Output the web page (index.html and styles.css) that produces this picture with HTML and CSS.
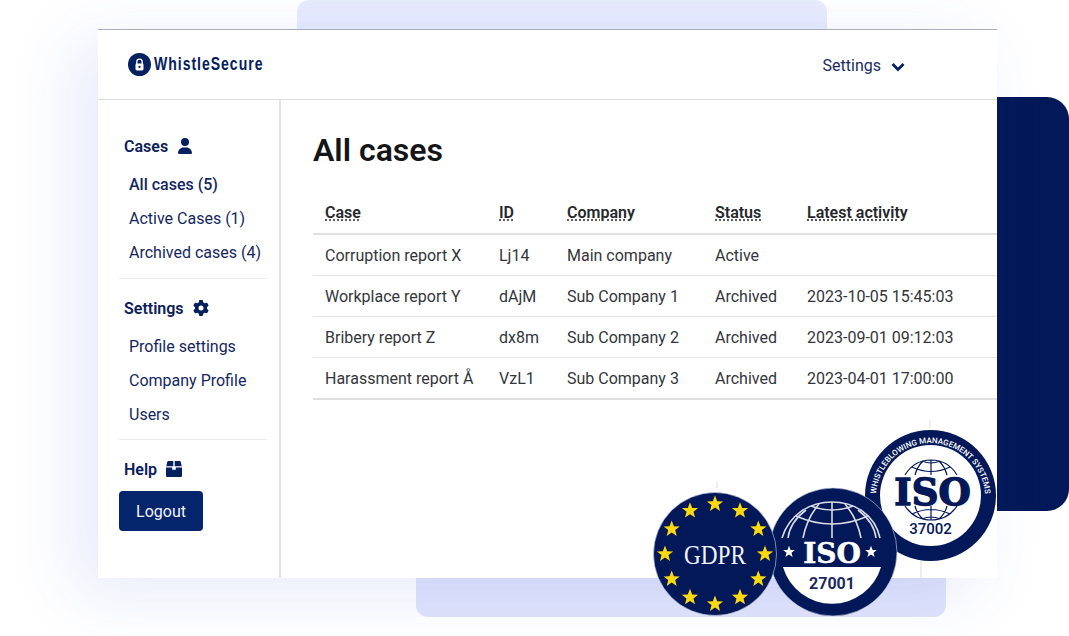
FILE: index.html
```html
<!DOCTYPE html>
<html lang="en">
<head>
    <meta charset="UTF-8">
    <meta name="viewport" content="width=device-width, initial-scale=1.0">
    <title>WhistleSecure - All cases</title>
    <link rel="stylesheet" href="styles.css">
</head>
<body>
    <div class="stage">
        <div class="panel panel-top"></div>
        <div class="panel panel-bottom"></div>
        <div class="panel panel-right"></div>

        <div class="window">
            <header class="topbar">
                <div class="logo">
                    <svg class="logo-mark" viewBox="0 0 24 24">
                        <circle cx="12" cy="12" r="12" fill="#04205f"/>
                        <path d="M9.2 11.5V9.2a2.8 2.8 0 0 1 5.6 0V11.5" fill="none" stroke="#fff" stroke-width="1.4"/>
                        <rect x="7.8" y="11" width="8.4" height="7.2" rx="1.4" fill="#fff"/>
                        <circle cx="12" cy="14.5" r="1.2" fill="#04205f"/>
                    </svg>
                    <span class="logo-text">WhistleSecure</span>
                </div>
                <div class="topbar-menu">
                    <span>Settings</span>
                    <svg class="chevron" viewBox="0 0 14 10">
                        <path d="M1.5 2l5.5 5.5L12.500 2" fill="none" stroke="#04205f" stroke-width="2.8"/>
                    </svg>
                </div>
            </header>

            <div class="content">
                <aside class="sidebar">
                    <div class="side-title">Cases
                        <svg class="side-icon" viewBox="0 0 448 512"><path d="M224 256A128 128 0 1 0 224 0a128 128 0 1 0 0 256zm-45.7 48C79.8 304 0 383.8 0 482.3C0 498.7 13.3 512 29.7 512H418.3c16.4 0 29.7-13.3 29.7-29.7C448 383.8 368.2 304 269.7 304H178.3z"/></svg>
                    </div>
                    <nav class="side-links">
                        <a class="side-link active">All cases (5)</a>
                        <a class="side-link">Active Cases (1)</a>
                        <a class="side-link">Archived cases (4)</a>
                    </nav>
                    <hr class="side-rule">

                    <div class="side-title">Settings
                        <svg class="side-icon" viewBox="0 0 512 512"><path d="M495.9 166.6c3.2 8.7 .5 18.4-6.4 24.6l-43.3 39.4c1.1 8.3 1.7 16.8 1.7 25.4s-.6 17.1-1.7 25.4l43.3 39.4c6.9 6.2 9.6 15.9 6.4 24.6c-4.4 11.9-9.7 23.3-15.8 34.3l-4.7 8.1c-6.6 11-14 21.4-22.1 31.2c-5.9 7.2-15.7 9.6-24.5 6.8l-55.7-17.7c-13.4 10.3-28.2 18.9-44 25.4l-12.5 57.1c-2 9.1-9 16.3-18.2 17.8c-13.8 2.3-28 3.5-42.5 3.5s-28.7-1.2-42.5-3.5c-9.2-1.5-16.2-8.7-18.2-17.8l-12.5-57.1c-15.8-6.5-30.6-15.1-44-25.4L83.1 425.9c-8.8 2.8-18.6 .3-24.5-6.8c-8.1-9.8-15.5-20.2-22.1-31.2l-4.7-8.1c-6.1-11-11.4-22.4-15.8-34.3c-3.2-8.7-.5-18.4 6.4-24.6l43.3-39.4C64.6 273.1 64 264.6 64 256s.6-17.1 1.7-25.4L22.4 191.2c-6.9-6.2-9.6-15.9-6.4-24.6c4.4-11.9 9.7-23.3 15.8-34.3l4.7-8.1c6.6-11 14-21.4 22.1-31.2c5.9-7.2 15.7-9.6 24.5-6.8l55.7 17.7c13.4-10.3 28.2-18.9 44-25.4l12.5-57.1c2-9.1 9-16.3 18.2-17.8C227.3 1.2 241.5 0 256 0s28.7 1.2 42.5 3.5c9.2 1.5 16.2 8.7 18.2 17.8l12.5 57.1c15.8 6.5 30.6 15.1 44 25.4l55.7-17.7c8.8-2.8 18.6-.3 24.5 6.8c8.1 9.8 15.5 20.2 22.1 31.2l4.7 8.1c6.1 11 11.4 22.4 15.8 34.3zM256 336a80 80 0 1 0 0-160 80 80 0 1 0 0 160z"/></svg>
                    </div>
                    <nav class="side-links">
                        <a class="side-link">Profile settings</a>
                        <a class="side-link">Company Profile</a>
                        <a class="side-link">Users</a>
                    </nav>
                    <hr class="side-rule rule-help">

                    <div class="side-title">Help
                        <svg class="side-icon icon-box" viewBox="0 0 16 16"><path d="M2.6 0H7.3V5.2H0.3L1.2 1.1C1.4 .4 1.9 0 2.6 0zM8.7 0H13.4C14.1 0 14.6 .4 14.8 1.1L15.7 5.2H8.7zM0 6.6H6.2V8.8H9.8V6.6H16V14.4C16 15.3 15.3 16 14.4 16H1.6C.7 16 0 15.3 0 14.4z"/></svg>
                    </div>
                    <button class="logout">Logout</button>
                </aside>

                <main class="main">
                    <h1>All cases</h1>
                    <table class="cases">
                        <thead>
                            <tr>
                                <th class="col-case"><abbr>Case</abbr></th>
                                <th class="col-id"><abbr>ID</abbr></th>
                                <th class="col-company"><abbr>Company</abbr></th>
                                <th class="col-status"><abbr>Status</abbr></th>
                                <th><abbr>Latest activity</abbr></th>
                            </tr>
                        </thead>
                        <tbody>
                            <tr>
                                <td>Corruption report X</td>
                                <td>Lj14</td>
                                <td>Main company</td>
                                <td>Active</td>
                                <td></td>
                            </tr>
                            <tr>
                                <td>Workplace report Y</td>
                                <td>dAjM</td>
                                <td>Sub Company 1</td>
                                <td>Archived</td>
                                <td>2023-10-05 15:45:03</td>
                            </tr>
                            <tr>
                                <td>Bribery report Z</td>
                                <td>dx8m</td>
                                <td>Sub Company 2</td>
                                <td>Archived</td>
                                <td>2023-09-01 09:12:03</td>
                            </tr>
                            <tr>
                                <td>Harassment report Å</td>
                                <td>VzL1</td>
                                <td>Sub Company 3</td>
                                <td>Archived</td>
                                <td>2023-04-01 17:00:00</td>
                            </tr>
                        </tbody>
                    </table>
                </main>
            </div>
        </div>

        <!-- certification badges, drawn in page coordinates -->
        <svg class="badges" viewBox="0 0 1069 636">
            <defs>
                <polygon id="star" points="0,-8.5 2.2,-2.8 8.1,-2.6 3.5,1.1 5,6.9 0,3.6 -5,6.9 -3.5,1.1 -8.1,-2.6 -2.2,-2.8"/>
                <polygon id="star-small" points="0,-6.2 1.6,-2 5.9,-1.9 2.5,.8 3.6,5 0,2.6 -3.6,5 -2.5,.8 -5.9,-1.9 -1.6,-2"/>
                <path id="ring-text" d="M877 508A54.500 54.500 0 1 1 984 508"/>
            </defs>

            <g class="ticks">
                <path d="M717 482V488M930 420V428M921 560V578"/>
            </g>

            <!-- ISO 37002 -->
            <circle cx="930.5" cy="495.5" r="65.5" fill="#021858"/>
            <circle cx="930.5" cy="495.5" r="50.5" fill="#fff"/>
            <text class="ring-label"><textPath href="#ring-text" startOffset="50%" text-anchor="middle">WHISTLEBLOWING MANAGEMENT SYSTEMS</textPath></text>
            <g class="globe-navy">
                <path d="M905 475C911 465 920 460 931 460C942 460 951 465 957 475M912 467Q931 476 950 467M922 461Q931 465 940 461M931 460V475M923 461Q917 467 915 475M939 461Q945 467 947 475"/>
                <path d="M905 506C911 515 920 520 931 520C942 520 951 515 957 506M912 514Q931 505 950 514M922 519Q931 515 940 519M931 506V520M915 506Q917 514 923 519M947 506Q945 514 939 519"/>
            </g>
            <text class="iso-big" x="932.500" y="505">ISO</text>
            <text class="iso-num" x="930.5" y="534">37002</text>

            <!-- ISO 27001 -->
            <circle cx="833" cy="552" r="64" fill="#021858" stroke="#cfd4e6" stroke-width=".6"/>
            <path d="M783 567H881A51 51 0 0 1 783 567Z" fill="#fff"/>
            <g class="globe-white">
                <path d="M782 538C789 515 809 502 832 502C855 502 875 515 880 538"/>
                <path d="M796 516Q832 532 868 516M811 506Q832 514 853 506"/>
                <path d="M832 502V538M819 504Q807 518 803 538M845 504Q857 518 861 538M806 510Q790 522 788 538M858 510Q874 522 876 538"/>
            </g>
            <use href="#star-small" x="789" y="552" fill="#fff"/>
            <use href="#star-small" x="871" y="552" fill="#fff"/>
            <text class="iso-white" x="832" y="563">ISO</text>
            <text class="iso-small" x="832" y="589">27001</text>

            <!-- GDPR -->
            <circle cx="715" cy="554" r="61.5" fill="#021858" stroke="#cfd4e6" stroke-width=".6"/>
            <text class="gdpr" x="684" y="564" textLength="62" lengthAdjust="spacingAndGlyphs">GDPR</text>
            <g fill="#fcd90f">
                <use href="#star" x="715" y="504"/>
                <use href="#star" x="740" y="510.7"/>
                <use href="#star" x="758.3" y="529"/>
                <use href="#star" x="765" y="554"/>
                <use href="#star" x="758.3" y="579"/>
                <use href="#star" x="740" y="597.3"/>
                <use href="#star" x="715" y="604"/>
                <use href="#star" x="690" y="597.3"/>
                <use href="#star" x="671.7" y="579"/>
                <use href="#star" x="665" y="554"/>
                <use href="#star" x="671.7" y="529"/>
                <use href="#star" x="690" y="510.7"/>
            </g>
        </svg>
    </div>
</body>
</html>
```

FILE: styles.css
```css
* {
    box-sizing: border-box;
}
body {
    margin: 0;
    background: #fff;
    font-family: Roboto, Arial, sans-serif;
    font-size: 16px;
    color: #0b2059;
    overflow: hidden;
}
.stage {
    position: relative;
    width: 1069px;
    height: 636px;
    padding: 29px 72px 58px 98px;
    overflow: hidden;
}

/* shapes behind the window */
.panel {
    position: absolute;
}
.panel-top {
    left: 297px;
    top: 0;
    width: 530px;
    height: 40px;
    background: #e8ebfd;
    border-radius: 12px 12px 0 0;
}
.panel-bottom {
    left: 416px;
    top: 560px;
    width: 530px;
    height: 57px;
    background: #e0e4fb;
    border-radius: 0 0 12px 12px;
}
.panel-right {
    left: 997px;
    top: 97px;
    width: 72px;
    height: 414px;
    background: #021858;
    border-radius: 0 22px 22px 0;
}

.window {
    position: relative;
    height: 549px;
    background: #fff;
    border-top: 1px solid #a9adbd;
    box-shadow: -22px 14px 60px rgba(70, 90, 225, 0.13);
    display: flex;
    flex-direction: column;
}

.topbar {
    height: 70px;
    flex: none;
    padding: 0 92px 0 30px;
    border-bottom: 1px solid #dcdde0;
    display: flex;
    justify-content: space-between;
    align-items: center;
}
.logo {
    display: flex;
    align-items: center;
    gap: 3px;
}
.logo-mark {
    width: 23px;
    height: 23px;
}
.logo-text {
    font-family: "Liberation Sans", sans-serif;
    font-weight: 700;
    font-size: 18px;
    letter-spacing: 1.25px;
    color: #04205f;
    transform: scaleX(0.78);
    transform-origin: left center;
}
.topbar-menu {
    display: flex;
    align-items: center;
    gap: 10px;
    margin-top: 2px;
    color: #1a2b5f;
}
.chevron {
    width: 14px;
    height: 10px;
    margin-top: 2px;
}

.content {
    flex: 1;
    display: flex;
    min-height: 0;
}

.sidebar {
    width: 183px;
    flex: none;
    padding: 35px 12px 0 21px;
    border-right: 2px solid #e2e3e6;
}
.side-title {
    height: 22px;
    margin-left: 5px;
    display: flex;
    align-items: center;
    gap: 9px;
    font-weight: 600;
    color: #0b2059;
}
.side-icon {
    width: 16px;
    height: 16px;
    fill: #04205f;
}
.side-links {
    margin-top: 11px;
}
.side-link {
    display: block;
    height: 34px;
    line-height: 34px;
    margin-left: 10px;
    color: #14275f;
}
.side-link.active {
    font-weight: 500;
}
.side-rule {
    margin: 8px 0 18px;
    border: 0;
    border-top: 1px solid #eceded;
}
.rule-help {
    margin-top: 7px;
}
.logout {
    display: block;
    width: 84px;
    height: 40px;
    margin-top: 11px;
    background: #04246b;
    color: #f2f4fa;
    border: none;
    border-radius: 4px;
    font-family: inherit;
    font-size: 16px;
}

.main {
    flex: 1;
    min-width: 0;
    padding: 29px 0 0 32px;
}
h1 {
    margin: 0 0 26px;
    font-size: 32px;
    line-height: 42px;
    font-weight: 600;
    color: #141517;
}
.cases {
    width: 100%;
    border-collapse: collapse;
    table-layout: fixed;
    color: #33363b;
    border-bottom: 2px solid #dfe0e2;
}
.cases th,
.cases td {
    padding: 0 12px;
    text-align: left;
    white-space: nowrap;
}
.cases th {
    height: 37px;
    padding-bottom: 6px;
    border-bottom: 2px solid #dfe0e2;
    font-weight: 600;
    color: #26282c;
}
.cases td {
    height: 41px;
    padding-top: 1px;
}
.cases tbody tr + tr td {
    border-top: 1px solid #e4e5e7;
}
.cases tbody tr:last-child td {
    height: 42px;
}
.col-case {
    width: 174px;
}
.col-id {
    width: 68px;
}
.col-company {
    width: 148px;
}
.col-status {
    width: 92px;
}
abbr {
    text-decoration: underline dotted;
    text-underline-offset: 2px;
}

/* badges sit over the corner of the window */
.badges {
    position: absolute;
    left: 0;
    top: 0;
    width: 1069px;
    height: 636px;
}
.ticks path {
    stroke: #dcdde2;
    fill: none;
}
.globe-white path {
    fill: none;
    stroke: #d8dbe6;
    stroke-width: 1.6;
}
.globe-navy path {
    fill: none;
    stroke: #021858;
    stroke-width: 1.2;
}
.ring-label {
    font-family: Roboto, sans-serif;
    font-weight: 500;
    font-size: 8px;
    fill: #fff;
}
.iso-big {
    font-family: "DejaVu Serif", serif;
    font-weight: 700;
    font-size: 37px;
    text-anchor: middle;
    fill: #021858;
    stroke: #021858;
    stroke-width: 1.4;
}
.iso-num {
    font-family: Roboto, sans-serif;
    font-weight: 500;
    font-size: 15px;
    text-anchor: middle;
    fill: #021858;
}
.iso-white {
    font-family: "DejaVu Serif", serif;
    font-weight: 700;
    font-size: 28px;
    text-anchor: middle;
    fill: #fff;
    stroke: #fff;
    stroke-width: 0.5;
}
.iso-small {
    font-family: Roboto, sans-serif;
    font-weight: 700;
    font-size: 16px;
    text-anchor: middle;
    fill: #1a2a5e;
}
.gdpr {
    font-family: "Liberation Serif", serif;
    font-size: 27px;
    fill: #f3f4f8;
}
```
